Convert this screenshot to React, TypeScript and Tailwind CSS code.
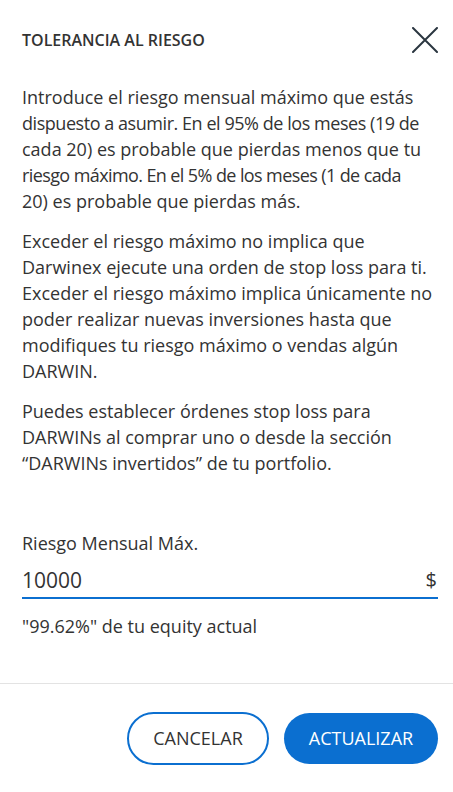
import { useState } from 'react';

const font = { fontFamily: '"Open Sans", "Noto Sans", sans-serif' };

function CloseIcon() {
  return (
    <svg width="26" height="26" viewBox="0 0 26 26" fill="none" className="shrink-0">
      <path d="M1 1 L25 25 M25 1 L1 25" stroke="#2b3640" strokeWidth="2" strokeLinecap="round" />
    </svg>
  );
}

export default function App() {
  const [value, setValue] = useState('10000');

  return (
    <div className="w-[453px] h-[792px] bg-white text-[#333333] flex flex-col overflow-hidden" style={font}>
      {/* Header */}
      <div className="flex items-center justify-between pl-[22px] pr-[15px] pt-[27px]">
        <h2 className="text-[16px] font-semibold leading-[26px]">TOLERANCIA AL RIESGO</h2>
        <button className="text-[#2b3640]">
          <CloseIcon />
        </button>
      </div>

      {/* Body */}
      <div className="pl-[22px] pr-[14px] mt-[31px] text-[18px] leading-[26px] flex flex-col gap-[14px]">
        <p className="whitespace-nowrap">
          <span className="block">Introduce el riesgo mensual máximo que estás</span>
          <span className="block tracking-[-0.45px]">dispuesto a asumir. En el 95% de los meses (19 de</span>
          <span className="block">cada 20) es probable que pierdas menos que tu</span>
          <span className="block tracking-[-0.6px]">riesgo máximo. En el 5% de los meses (1 de cada</span>
          <span className="block">20) es probable que pierdas más.</span>
        </p>
        <p>
          Exceder el riesgo máximo no implica que Darwinex ejecute una orden de stop loss para ti.
          Exceder el riesgo máximo implica únicamente no poder realizar nuevas inversiones hasta que
          modifiques tu riesgo máximo o vendas algún DARWIN.
        </p>
        <p>
          Puedes establecer órdenes stop loss para DARWINs al comprar uno o desde la sección
          “DARWINs invertidos” de tu portfolio.
        </p>
      </div>

      {/* Field */}
      <div className="pl-[22px] pr-[15px] mt-[55px] flex flex-col">
        <label className="text-[18px] leading-[24px]">Riesgo Mensual Máx.</label>
        <div className="flex items-end h-[44px] pb-[3px] border-b-2 border-[#0b6fd0]">
          <input
            value={value}
            onChange={(e) => setValue(e.target.value)}
            className="flex-1 min-w-0 bg-transparent outline-none text-[21px] leading-[28px] text-[#333333] caret-[#333333]"
            style={font}
          />
          <span className="text-[20px] leading-[28px] pr-[1px]">$</span>
        </div>
        <p className="text-[18px] leading-[24px] mt-[15px]">"99.62%" de tu equity actual</p>
      </div>

      {/* Footer */}
      <div className="mt-[45px] border-t border-[#e3e3e3]" />
      <div className="flex justify-end gap-[15px] pr-[15px] pt-[28px]">
        <button className="w-[142px] h-[53px] rounded-full border-2 border-[#0b6fd0] text-[18px] text-[#333333] bg-white">
          CANCELAR
        </button>
        <button className="w-[154px] h-[51px] mt-[1px] rounded-full bg-[#0b6fd0] text-[18px] text-white">
          ACTUALIZAR
        </button>
      </div>
    </div>
  );
}
